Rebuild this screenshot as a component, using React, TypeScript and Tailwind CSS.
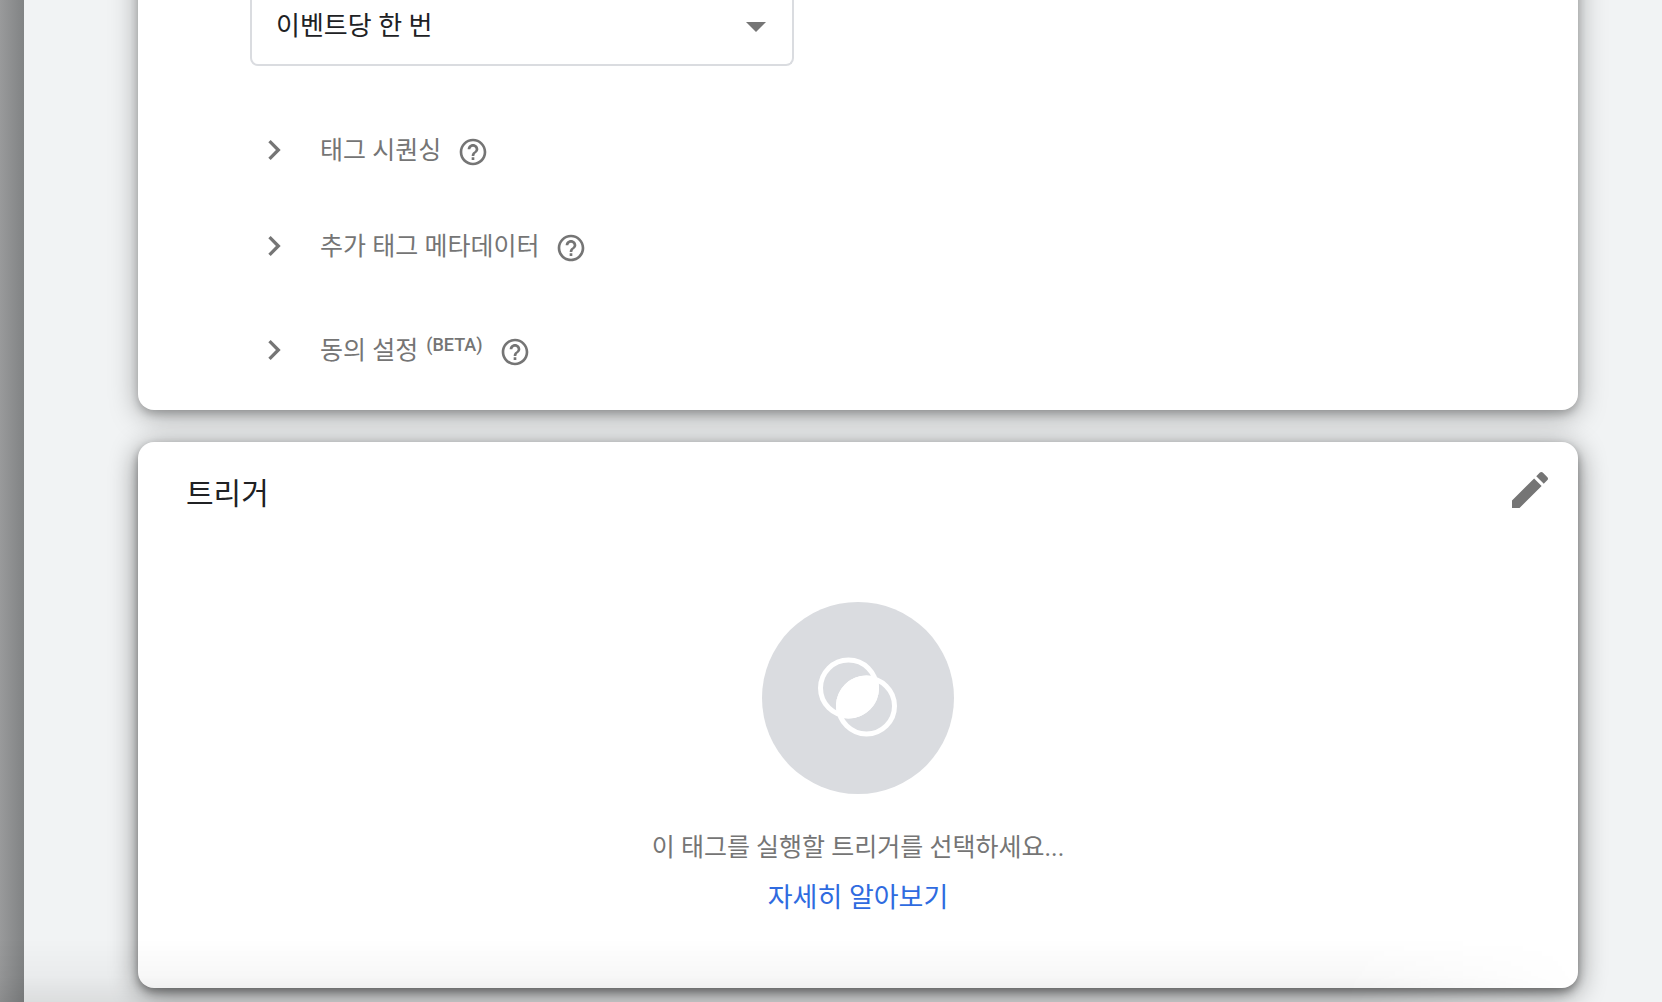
const rows = [
  { label: "태그 시퀀싱", beta: false },
  { label: "추가 태그 메타데이터", beta: false },
  { label: "동의 설정", beta: true },
];

function ChevronIcon() {
  return (
    <svg viewBox="0 0 24 24" className="w-10 h-10 shrink-0" fill="currentColor" aria-hidden="true">
      <path d="M10 6 8.59 7.41 13.17 12l-4.58 4.59L10 18l6-6z" />
    </svg>
  );
}

function HelpIcon() {
  return (
    <svg viewBox="0 0 24 24" className="w-8 h-8" fill="currentColor" aria-hidden="true">
      <path d="M11 18h2v-2h-2v2zm1-16C6.48 2 2 6.48 2 12s4.48 10 10 10 10-4.48 10-10S17.52 2 12 2zm0 18c-4.41 0-8-3.59-8-8s3.59-8 8-8 8 3.59 8 8-3.59 8-8 8zm0-14c-2.21 0-4 1.79-4 4h2c0-1.1.9-2 2-2s2 .9 2 2c0 2-3 1.75-3 5h2c0-2.25 3-2.5 3-5 0-2.21-1.79-4-4-4z" />
    </svg>
  );
}

function PencilIcon() {
  return (
    <svg viewBox="0 0 24 24" className="w-12 h-12" fill="currentColor" aria-hidden="true">
      <path d="M3 17.25V21h3.75L17.81 9.94l-3.75-3.75L3 17.25zM20.71 7.04c.39-.39.39-1.02 0-1.41l-2.34-2.34c-.39-.39-1.02-.39-1.41 0l-1.83 1.83 3.75 3.75 1.83-1.83z" />
    </svg>
  );
}

function TriggerIcon() {
  return (
    <svg viewBox="0 0 192 192" className="w-48 h-48" aria-hidden="true">
      <circle cx="96" cy="96" r="96" fill="#dadce0" />
      <g fill="none" stroke="#fff" strokeWidth="5">
        <circle cx="86.5" cy="86" r="28" />
        <circle cx="104.5" cy="104" r="28" />
      </g>
      {/* overlap of the two rings */}
      <path d="M115.1 75.4A30.5 30.5 0 0 0 75.9 114.6 30.5 30.5 0 0 0 115.1 75.4z" fill="#fff" />
    </svg>
  );
}

function TagSettings() {
  return (
    <section className="-mt-10 pt-10 bg-white rounded-b-2xl pl-28 pb-1 shadow-[0_4px_8px_rgba(0,0,0,0.2),0_6px_28px_rgba(0,0,0,0.34)]">
      <div className="relative w-[544px] max-w-full">
        <select
          aria-label="태그 실행 옵션"
          className="block w-full h-[66px] appearance-none bg-white border-2 border-t-0 border-[#dadce0] rounded-b-lg pl-6 pr-14 pb-3 text-[26px] leading-10 text-[#202124]"
        >
          <option>이벤트당 한 번</option>
        </select>
        <svg
          viewBox="0 0 24 24"
          className="absolute top-0 right-3.5 w-12 h-12 text-[#757575] pointer-events-none"
          fill="currentColor"
          aria-hidden="true"
        >
          <path d="M7 11l5 5 5-5z" />
        </svg>
      </div>

      <ul className="pt-9 pl-1 text-[#757575]">
        {rows.map((row) => (
          <li key={row.label} className={row.beta ? "flex items-center h-28" : "flex items-center h-24"}>
            <button type="button" className="flex items-center gap-[26px] text-[25px] leading-8">
              <ChevronIcon />
              <span className="flex gap-2 pt-0.5">
                {row.label}
                {row.beta && <span className="text-lg leading-5 font-medium">(BETA)</span>}
              </span>
            </button>
            <button type="button" aria-label="도움말" className="ml-4 pt-1">
              <HelpIcon />
            </button>
          </li>
        ))}
      </ul>
    </section>
  );
}

function TriggerCard() {
  return (
    <section className="bg-white rounded-2xl pb-[70px] shadow-[0_4px_8px_rgba(0,0,0,0.34),0_6px_28px_rgba(0,0,0,0.48)]">
      <header className="flex items-start justify-between pt-6 pl-12 pr-6">
        <h2 className="pt-1 text-[30px] leading-[48px] text-[#202124]">트리거</h2>
        <button type="button" aria-label="트리거 수정" className="text-[#757575]">
          <PencilIcon />
        </button>
      </header>
      <div className="flex flex-col items-center pt-[84px]">
        <TriggerIcon />
        <p className="pt-9 text-[25px] leading-9 text-[#757575]">이 태그를 실행할 트리거를 선택하세요...</p>
        <a href="#" className="pt-3 text-[27px] leading-10 text-[#2f6be0]">
          자세히 알아보기
        </a>
      </div>
    </section>
  );
}

export default function App() {
  return (
    <div className="relative flex min-h-screen overflow-hidden bg-[#f1f3f4] font-[Roboto,'Noto_Sans_CJK_KR',sans-serif]">
      <div className="w-6 shrink-0 bg-linear-to-r from-[#999a9b] to-[#818384]" />
      <main className="flex-1 flex flex-col gap-8 pl-[114px] pr-[84px] pb-3.5">
        <TagSettings />
        <TriggerCard />
      </main>
      <div className="absolute bottom-0 left-0 right-20 h-16 bg-linear-to-b from-transparent via-black/3 via-60% to-black/9 mask-r-from-85% pointer-events-none" />
    </div>
  );
}
